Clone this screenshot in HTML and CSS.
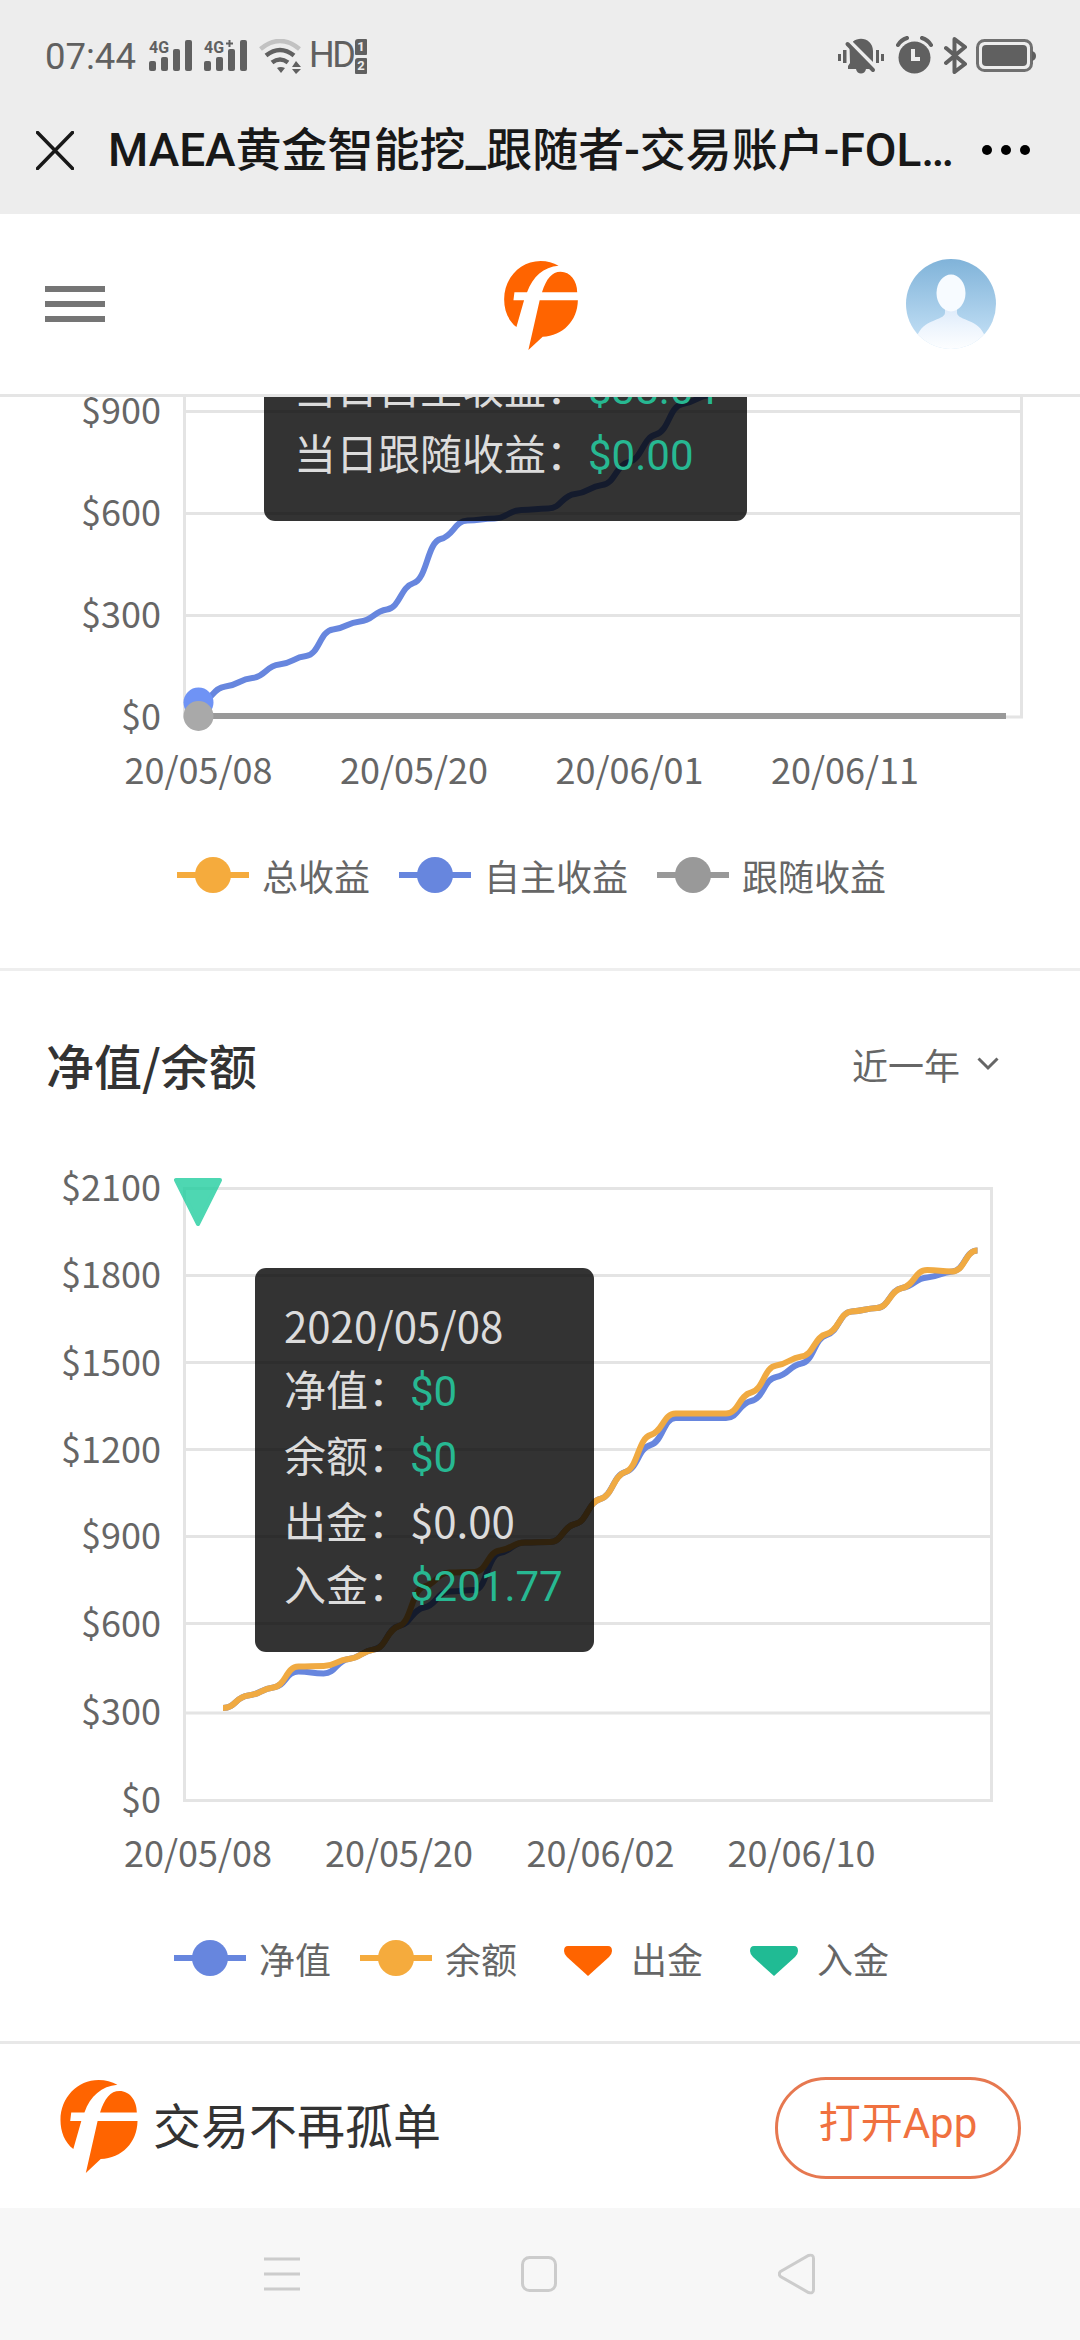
FILE: index.html
```html
<!DOCTYPE html>
<html lang="zh-CN">
<head>
  <meta charset="UTF-8" />
  <meta name="viewport" content="width=device-width, initial-scale=1.0"/>
  <title>MAEA黄金智能挖_跟随者-交易账户</title>
  <link rel="stylesheet" href="styles.css">
</head>
<body>

  <svg class="defs" width="0" height="0">
    <symbol id="logo" viewBox="103 62 222 268">
      <path fill="#ff6400" d="M140 261C115 241 103 211 103 177C103 113 152 62 213 62C233 62 251 67 267 76C222 80 189 108 172 156H134L131 180H163Z"/>
      <path fill="#ff6400" d="M217 156C230 115 247 94 273 94C302 94 323 121 323 156ZM210 180H325C324 242 280 287 219 290L176 330Z"/>
    </symbol>
  </svg>

  <div class="status-bar">
    <div class="status-left">
      <span class="clock">07:44</span>
      <svg class="signal" width="44" height="32" viewBox="0 0 44 32">
        <text x="0" y="13" textLength="20" lengthAdjust="spacingAndGlyphs">4G</text>
        <rect x="0" y="21" width="7" height="10" rx="2"/>
        <rect x="12" y="17" width="7" height="14" rx="2"/>
        <rect x="24" y="9" width="7" height="22" rx="2"/>
        <rect x="36" y="0" width="7" height="31" rx="2"/>
      </svg>
      <svg class="signal" width="44" height="32" viewBox="0 0 44 32">
        <text x="0" y="13" textLength="20" lengthAdjust="spacingAndGlyphs">4G</text>
        <path d="M24.500 0h2v2.500h2.500v2h-2.500v2.500h-2v-2.500h-2.500v-2h2.500z"/>
        <rect x="0" y="21" width="7" height="10" rx="2"/>
        <rect x="12" y="17" width="7" height="14" rx="2"/>
        <rect x="24" y="9" width="7" height="22" rx="2"/>
        <rect x="36" y="0" width="7" height="31" rx="2"/>
      </svg>
      <svg class="wifi" width="42" height="35" viewBox="0 0 42 35">
        <path class="arc dim" d="M1.500 10Q21-6 40.500 10"/>
        <path class="arc" d="M7 16.500Q21 5.500 35 16.500M13 23.500Q21 17.500 29 23.500"/>
        <path d="M18 29Q21.500 27 26 29L22 34ZM37 22l5 6h-9zM33 30h9l-5 5z"/>
      </svg>
      <span class="hd">HD</span>
      <span class="sims"><i>1</i><i>2</i></span>
    </div>
    <div class="status-right">
      <svg class="bell" width="46" height="36" viewBox="0 0 46 36">
        <path d="M0 16h3v7H0zM5 12h3.500v13H5zM38 12h3v13h-3zM43 16h3v7h-3z"/>
        <path d="M15 3.500C22-2.500 35 1 35 13V24L15 4ZM11.500 8L34 31H28C27 37 19 37 18 31H10V28L12 25Z"/>
        <path class="slash" d="M9.500 6L35 32"/>
      </svg>
      <svg class="alarm" width="37" height="38" viewBox="0 0 37 38">
        <circle cx="18.500" cy="21.500" r="16"/>
        <path class="lid" d="M2 9Q5 4 11 2M35 9Q32 4 26 2"/>
        <path class="hands" d="M17 13v10h7"/>
      </svg>
      <svg class="bt" width="24" height="39" viewBox="0 0 24 39">
        <path d="M2 12L21 28L10.500 36V3L21 11L2 27"/>
      </svg>
      <svg class="battery" width="60" height="34" viewBox="0 0 60 34">
        <rect class="shell" x="1.500" y="1.500" width="54" height="30" rx="7"/>
        <rect x="6" y="6" width="45" height="21" rx="4"/>
        <path d="M56 12q4 1 4 5t-4 5z"/>
      </svg>
    </div>
  </div>

  <div class="title-bar">
    <svg class="close" width="38" height="39" viewBox="0 0 38 39">
      <path d="M1.500 1.500L36.500 37.500M36.500 1.500L1.500 37.500"/>
    </svg>
    <span class="page-title">MAEA黄金智能挖_跟随者-交易账户-FOL…</span>
    <span class="more"><i></i><i></i><i></i></span>
  </div>

  <header class="header">
    <div class="menu"><i></i><i></i><i></i></div>
    <svg class="header-logo"><use href="#logo"/></svg>
    <svg class="avatar" viewBox="0 0 90 90">
      <defs>
        <linearGradient id="sky" x1="0" y1="0" x2="0" y2="1">
          <stop offset="0" stop-color="#80b3d9"/>
          <stop offset="1" stop-color="#c9e4f8"/>
        </linearGradient>
        <linearGradient id="person" x1="0" y1="0" x2="0" y2="1">
          <stop offset="0" stop-color="#dceafa"/>
          <stop offset=".5" stop-color="#eef5fd"/>
          <stop offset="1" stop-color="#fdfeff"/>
        </linearGradient>
        <clipPath id="round"><circle cx="45" cy="45" r="45"/></clipPath>
      </defs>
      <g clip-path="url(#round)">
        <rect width="90" height="90" fill="url(#sky)"/>
        <path fill="url(#person)" d="M39 48h12v6C52 62 74 60 79 78V90H11V78C16 60 38 62 39 54Z"/>
        <ellipse cx="45" cy="34" rx="14.500" ry="18.500" fill="#f7fbff"/>
      </g>
    </svg>
  </header>

  <section class="card profit">
    <div class="chart">
      <svg class="plot" width="1080" height="410" viewBox="0 397 1080 410">
        <path class="grid" d="M184.500 395V717H1021.500V395M184.500 411.500H1021.500M184.500 513.500H1021.500M184.500 615.500H1021.500"/>
        <g class="y-labels">
          <text x="161" y="424">$900</text>
          <text x="161" y="526">$600</text>
          <text x="161" y="628">$300</text>
          <text x="161" y="730">$0</text>
        </g>
        <g class="x-labels">
          <text x="198.500" y="784">20/05/08</text>
          <text x="414" y="784">20/05/20</text>
          <text x="629.500" y="784">20/06/01</text>
          <text x="845" y="784">20/06/11</text>
        </g>
        <path class="line blue" id="selfProfit"/>
        <circle cx="198.500" cy="702.500" r="15" fill="#6f93f5"/>
        <path class="line gray" d="M198.500 716H1006"/>
        <circle cx="198.500" cy="716" r="15" fill="#a9a9a9"/>
      </svg>
      <div class="tooltip profit-tip">
        <p>当日自主收益：<b>$38.04</b></p>
        <p>当日跟随收益：<b>$0.00</b></p>
      </div>
    </div>
    <div class="legend">
      <span class="item"><i class="mark orange"></i>总收益</span>
      <span class="item"><i class="mark blue"></i>自主收益</span>
      <span class="item"><i class="mark gray"></i>跟随收益</span>
    </div>
  </section>

  <section class="card equity">
    <div class="card-head">
      <h2>净值/余额</h2>
      <div class="range">近一年
        <svg width="22" height="14" viewBox="0 0 22 14"><path d="M1.500 1.500L11 11L20.500 1.500"/></svg>
      </div>
    </div>
    <div class="chart">
      <svg class="plot" width="1080" height="726" viewBox="0 1160 1080 726">
        <path class="grid" d="M184.500 1188.500H991.500V1800.500H184.500ZM184.500 1275.500H991.500M184.500 1362.500H991.500M184.500 1449.500H991.500M184.500 1536.500H991.500M184.500 1623.500H991.500M184.500 1713H991.500"/>
        <g class="y-labels">
          <text x="161" y="1201">$2100</text>
          <text x="161" y="1288">$1800</text>
          <text x="161" y="1376">$1500</text>
          <text x="161" y="1463">$1200</text>
          <text x="161" y="1549">$900</text>
          <text x="161" y="1637">$600</text>
          <text x="161" y="1725">$300</text>
          <text x="161" y="1813">$0</text>
        </g>
        <g class="x-labels">
          <text x="198" y="1867">20/05/08</text>
          <text x="399" y="1867">20/05/20</text>
          <text x="600.500" y="1867">20/06/02</text>
          <text x="801.500" y="1867">20/06/10</text>
        </g>
        <path class="line blue" id="equity"/>
        <path class="line orange" id="balance"/>
        <path class="deposit" d="M176 1180H220L198 1224Z"/>
      </svg>
      <div class="tooltip equity-tip">
        <p class="edge">2020/05/08</p>
        <p>净值：<b>$0</b></p>
        <p>余额：<b>$0</b></p>
        <p>出金：$0.00</p>
        <p class="edge">入金：<b>$201.77</b></p>
      </div>
    </div>
    <div class="legend">
      <span class="item"><i class="mark blue"></i>净值</span>
      <span class="item"><i class="mark orange"></i>余额</span>
      <span class="item"><svg class="tri out" viewBox="0 0 72 30"><path d="M22 0H62Q66 0 66 5Q66 8 63 11L42 30L21 11Q18 8 18 5Q18 0 22 0Z"/></svg>出金</span>
      <span class="item"><svg class="tri in" viewBox="0 0 72 30"><path d="M22 0H62Q66 0 66 5Q66 8 63 11L42 30L21 11Q18 8 18 5Q18 0 22 0Z"/></svg>入金</span>
    </div>
  </section>

  <footer class="app-bar">
    <svg class="app-logo"><use href="#logo"/></svg>
    <span class="slogan">交易不再孤单</span>
    <button class="open-app">打开App</button>
  </footer>

  <nav class="system-nav">
    <svg width="36" height="40" viewBox="0 0 36 40"><path d="M0 5h36M0 20h36M0 35h36"/></svg>
    <svg width="36" height="40" viewBox="0 0 36 40"><rect x="1.500" y="3.500" width="33" height="33" rx="7"/></svg>
    <svg width="38" height="42" viewBox="0 0 38 42"><path d="M2.500 18.500L30.500 2.500Q35.500 1 35.500 5.500V36.500Q35.500 41 30.500 39.500L2.500 23.500Q0 21 2.500 18.500Z"/></svg>
  </nav>

  <script src="script.js"></script>
</body>
</html>
```
FILE: styles.css
```css
body {
  margin: 0;
  width: 1080px;
  height: 2340px;
  overflow: hidden;
  display: flex;
  flex-direction: column;
  background-color: #fff;
  color: #666;
  font-family: "Noto Sans CJK SC", sans-serif;
  font-size: 36px;
}

h2, p {
  margin: 0;
}

.defs {
  position: absolute;
}

.status-bar {
  display: flex;
  flex: none;
  box-sizing: border-box;
  justify-content: space-between;
  height: 108px;
  padding: 36px 44px 0 45px;
  background-color: #ededed;
  color: #606060;
  fill: #606060;
  font-family: Roboto, sans-serif;
}

.status-left,
.status-right {
  display: flex;
  align-items: flex-start;
}

.clock {
  width: 104px;
  font-size: 36.5px;
  line-height: 41px;
}

.signal {
  margin: 4px 11px 0 0;
  overflow: visible;
}

.signal text {
  font-size: 17px;
  font-weight: 700;
}

.wifi {
  margin: 3px 0 0 0;
}

.arc {
  fill: none;
  stroke: #606060;
  stroke-width: 4.5;
}

.arc.dim {
  stroke: #c2c2c2;
}

.hd {
  margin-left: 8px;
  width: 46px;
  font-size: 36px;
  line-height: 39px;
  letter-spacing: -2.5px;
}

.sims {
  display: flex;
  flex-direction: column;
  gap: 3px;
  margin: 3px 0 0 0;
}

.sims i {
  width: 12px;
  height: 16px;
  border-radius: 3px 1px 1px 1px;
  background-color: #606060;
  color: #ededed;
  font-size: 13px;
  font-weight: 700;
  font-style: normal;
  line-height: 16px;
  text-align: center;
}

.bell {
  margin: 2px 12px 0 0;
}

.slash {
  stroke: #606060;
  stroke-width: 4;
  stroke-linecap: round;
}

.alarm {
  margin-right: 11px;
}

.lid {
  fill: none;
  stroke: #606060;
  stroke-width: 4;
  stroke-linecap: round;
}

.hands {
  fill: none;
  stroke: #ededed;
  stroke-width: 4;
}

.bt {
  margin-right: 8px;
  fill: none;
  stroke: #606060;
  stroke-width: 4;
  stroke-linecap: round;
  stroke-linejoin: round;
}

.battery {
  margin-top: 3px;
}

.shell {
  fill: none;
  stroke: #707070;
  stroke-width: 3;
}

.title-bar {
  display: flex;
  flex: none;
  box-sizing: border-box;
  align-items: center;
  height: 106px;
  padding: 0 50px 22px 36px;
  background-color: #ededed;
}

.close {
  fill: none;
  stroke: #181818;
  stroke-width: 3.5;
  stroke-linecap: round;
}

.page-title {
  width: 845px;
  margin: 0 0 0 34px;
  color: #181818;
  font-family: Roboto, "Noto Sans CJK SC", sans-serif;
  font-size: 46px;
  font-weight: 500;
  line-height: 60px;
  white-space: nowrap;
}

.more {
  display: flex;
  gap: 9px;
  margin: 0 0 0 auto;
}

.more i {
  width: 10px;
  height: 10px;
  border-radius: 50%;
  background-color: #000;
}

.header {
  display: flex;
  flex: none;
  align-items: center;
  justify-content: space-between;
  height: 180px;
  padding: 0 84px 0 45px;
  border-bottom: 3px solid #e5e5e5;
}

.menu {
  display: flex;
  flex-direction: column;
  gap: 9px;
  width: 90px;
}

.menu i {
  width: 60px;
  height: 6px;
  background-color: #757575;
}

.header-logo {
  width: 74px;
  height: 89px;
  margin: 3px 0 0 41px;
}

.avatar {
  width: 90px;
  height: 90px;
}

.card {
  flex: none;
  box-sizing: border-box;
}

.profit {
  height: 574px;
  border-bottom: 3px solid #eee;
}

.equity {
  height: 1070px;
}

.chart {
  position: relative;
  overflow: hidden;
}

.plot {
  display: block;
}

.grid {
  fill: none;
  stroke: #e4e4e4;
  stroke-width: 3;
}

.plot text {
  fill: #666;
  font-size: 36px;
}

.y-labels {
  text-anchor: end;
}

.x-labels {
  text-anchor: middle;
}

.line {
  fill: none;
  stroke-width: 6;
}

.line.blue {
  stroke: #6786de;
}

.line.orange {
  stroke: #f0aa42;
}

.line.gray {
  stroke: #999;
}

.deposit {
  fill: #22ce9f;
  stroke: #22ce9f;
  stroke-width: 4;
  stroke-linejoin: round;
  opacity: .8;
}

/* tooltips float over the plots */
.tooltip {
  position: absolute;
  box-sizing: border-box;
  border-radius: 11px;
  background-color: rgba(0, 0, 0, .8);
  color: #dcdcdc;
  font-size: 42px;
  white-space: nowrap;
}

.tooltip p {
  height: 66px;
  line-height: 66px;
}

.tooltip p.edge {
  height: 60px;
  line-height: 60px;
}

.tooltip b {
  color: #27b892;
  font-family: Roboto, sans-serif;
  font-weight: 400;
}

.profit-tip {
  left: 264px;
  bottom: 286px;
  width: 483px;
  height: 300px;
  padding: 132px 0 0 30px;
}

.equity-tip {
  left: 255px;
  top: 108px;
  width: 339px;
  height: 384px;
  padding: 27px 0 0 29px;
}

.legend {
  display: flex;
  gap: 29px;
  padding: 41px 0 0 177px;
  line-height: 54px;
}

.equity .legend {
  padding: 45px 0 0 174px;
}

.item {
  display: flex;
  align-items: center;
  gap: 13px;
}

.mark {
  display: flex;
  align-items: center;
  justify-content: center;
  width: 72px;
  height: 6px;
}

.mark::after {
  content: "";
  width: 36px;
  height: 36px;
  flex: none;
  border-radius: 50%;
  background-color: inherit;
}

.mark.orange {
  background-color: #f5ab3d;
}

.mark.blue {
  background-color: #6786de;
}

.mark.gray {
  background-color: #999;
}

.tri {
  width: 72px;
  height: 30px;
  margin-top: 6px;
}

.tri.out {
  fill: #ff6400;
}

.tri.in {
  fill: #20bb94;
}

.card-head {
  display: flex;
  box-sizing: border-box;
  align-items: center;
  justify-content: space-between;
  height: 189px;
  padding: 0 81px 3px 46px;
}

.card-head h2 {
  color: #333;
  font-size: 48px;
  font-weight: 500;
}

.range {
  display: flex;
  align-items: center;
  gap: 17px;
}

.range svg {
  fill: none;
  stroke: #666;
  stroke-width: 3;
}

.app-bar {
  display: flex;
  flex: none;
  box-sizing: border-box;
  align-items: center;
  height: 167px;
  padding: 0 59px 0 60px;
  border-top: 3px solid #e8e8e8;
}

.app-logo {
  width: 78px;
  height: 93px;
}

.slogan {
  margin: -7px auto 0 15px;
  color: #333;
  font-size: 48px;
}

.open-app {
  box-sizing: border-box;
  width: 246px;
  height: 102px;
  margin-top: 3px;
  padding: 0 0 17px;
  border: 3px solid #e67850;
  border-radius: 51px;
  background: none;
  color: #f0713f;
  font-family: Roboto, "Noto Sans CJK SC", sans-serif;
  font-size: 42px;
}

.system-nav {
  display: flex;
  flex: 1;
  align-items: center;
  justify-content: space-between;
  padding: 0 264px 0 264px;
  background-color: #f7f7f7;
  fill: none;
  stroke: #ccc;
  stroke-width: 3;
}
```
FILE: script.js
```js
// smooth line through evenly spaced points
function drawLine(id, startX, step, ys) {
  const slope = ys.map(function (y, i) {
    if (i === 0 || i === ys.length - 1) return 0;
    const a = y - ys[i - 1];
    const b = ys[i + 1] - y;
    return a * b > 0 ? 0.5 * (a * b) / (a + b) : 0;
  });

  let d = 'M' + startX + ' ' + ys[0];
  for (let i = 1; i < ys.length; i++) {
    const x0 = startX + step * (i - 1);
    const x1 = startX + step * i;
    d += 'C' + [
      x0 + step / 2, ys[i - 1] + slope[i - 1] / 2,
      x1 - step / 2, ys[i] - slope[i] / 2,
      x1, ys[i]
    ].join(' ');
  }
  document.getElementById(id).setAttribute('d', d);
}

drawLine('selfProfit', 198.5, 26.9, [
  702.5, 686.5, 678, 664.5, 656, 629.5, 621.5, 609.5, 583, 539, 520.5,
  518.5, 510, 508.5, 494, 485, 462, 434.5, 404, 395, 380
]);

drawLine('equity', 223, 25.15, [
  1708, 1695.5, 1687.5, 1671.5, 1673.5, 1659, 1649.5, 1626, 1607.5, 1591.5,
  1590, 1553, 1542.5, 1542, 1524, 1499, 1472, 1445, 1418, 1418,
  1418, 1401, 1377, 1363.5, 1335, 1311.5, 1308, 1288, 1277.5, 1271.5, 1250.5
]);

drawLine('balance', 223, 25.15, [
  1708, 1695.5, 1687.5, 1666.5, 1666, 1659, 1649.5, 1626, 1586.5, 1572.5,
  1572, 1550.5, 1542.5, 1542, 1524, 1499, 1472, 1435, 1413.5, 1413.5,
  1413.5, 1392.5, 1365.5, 1356.5, 1334, 1311.5, 1308, 1288, 1270, 1271.5, 1250.5
]);
```
